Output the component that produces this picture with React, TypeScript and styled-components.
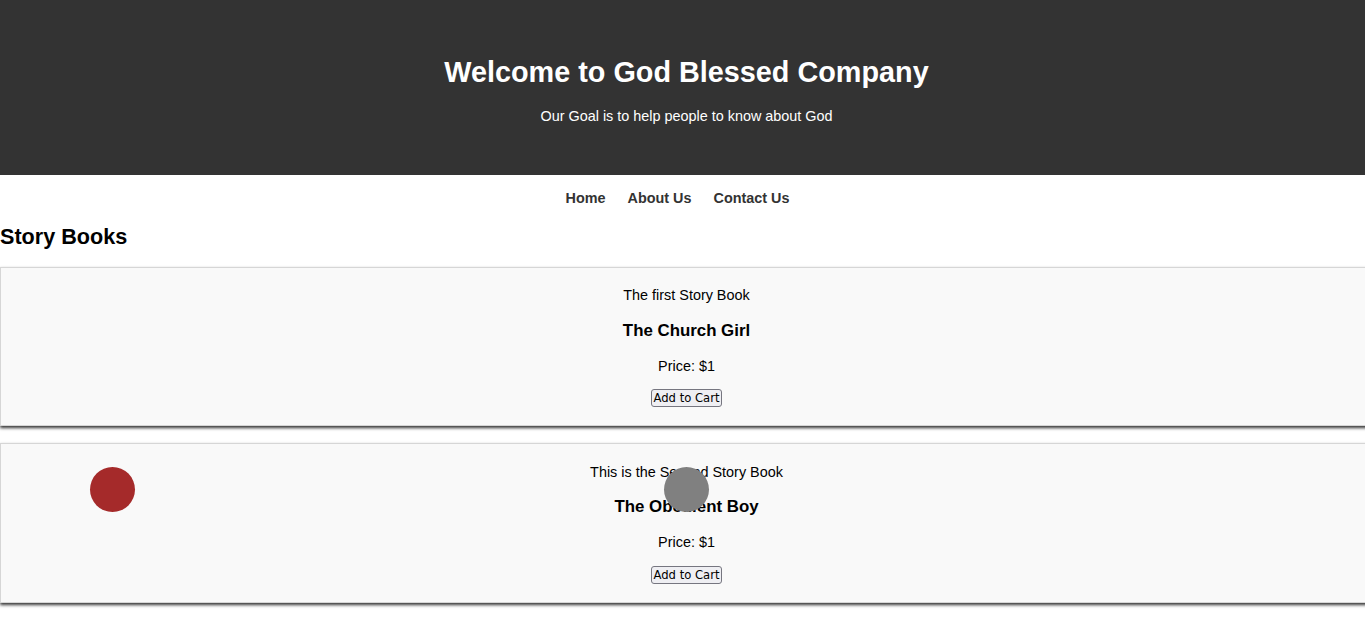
import React from "react";
import styled, { createGlobalStyle } from "styled-components";

const Global = createGlobalStyle`
  html, body { margin: 0; padding: 0; background: #fff; }
  body {
    font-family: "Liberation Sans", Arial, sans-serif;
    font-size: 14.4px;
    color: #000;
  }
  #root { position: relative; overflow-x: hidden; }
`;

const Page = styled.div`
  width: calc(100% + 8px);
`;

const Header = styled.header`
  background: #333;
  color: #fff;
  text-align: center;
  padding: 36px 0;
  height: 175px;
  box-sizing: border-box;
`;

const Title = styled.h1`
  font-size: 28.8px;
  font-weight: bold;
  margin: 20.3px 0 18.3px;
  line-height: 33px;
`;

const Tagline = styled.p`
  margin: 14.4px 0;
  line-height: 16.5px;
`;

const Nav = styled.nav`
  display: flex;
  justify-content: center;
  padding: 14.5px 0 14px;
  line-height: 16.5px;
`;

const NavLink = styled.a`
  color: #333;
  font-weight: bold;
  text-decoration: none;
  cursor: pointer;
  margin-right: 22px;
  &:last-child { margin-right: 18px; }
`;

const Section = styled.section`
  padding: 0;
`;

const SectionTitle = styled.h2`
  font-size: 21.6px;
  font-weight: bold;
  margin: 4px 0 18px;
  line-height: 25px;
`;

const Card = styled.div`
  background: #f9f9f9;
  border: 1px solid #d6d6d6;
  box-shadow: 0 2px 3px rgba(0, 0, 0, 0.8);
  text-align: center;
  padding: 5px 0 5px;
  margin: 0 0 17px;
`;

const Tag = styled.p`
  margin: 14.4px 0;
  line-height: 16.5px;
`;

const BookTitle = styled.h3`
  font-size: 16.85px;
  font-weight: bold;
  margin: 16.85px 0 17.85px;
  line-height: 19.4px;
`;

const Price = styled.p`
  margin: 14.4px 0;
  line-height: 16.5px;
`;

const Actions = styled.div`
  margin: 15px 0 12.9px;
  display: flex;
  justify-content: center;
`;

const CartButton = styled.button`
  font-family: "DejaVu Sans", sans-serif;
  font-size: 11.6px;
  line-height: 14px;
  padding: 1px 2px;
  color: #000;
  background: #efeff3;
  border: 1px solid #767680;
  border-radius: 3px;
  cursor: pointer;
`;

const Dot = styled.div<{ $color: string; $x: number; $y: number }>`
  position: absolute;
  width: 45px;
  height: 45px;
  border-radius: 50%;
  background: ${(p) => p.$color};
  left: ${(p) => p.$x}px;
  top: ${(p) => p.$y}px;
  pointer-events: none;
`;

const books = [
  { tag: "The first Story Book", title: "The Church Girl", price: "$1" },
  { tag: "This is the Second Story Book", title: "The Obedient Boy", price: "$1" },
];

export default function App() {
  return (
    <>
      <Global />
      <Page>
        <Header>
          <Title>Welcome to God Blessed Company</Title>
          <Tagline>Our Goal is to help people to know about God</Tagline>
        </Header>
        <Nav>
          <NavLink>Home</NavLink>
          <NavLink>About Us</NavLink>
          <NavLink>Contact Us</NavLink>
        </Nav>
        <Section>
          <SectionTitle>Story Books</SectionTitle>
          {books.map((b) => (
            <Card key={b.title}>
              <Tag>{b.tag}</Tag>
              <BookTitle>{b.title}</BookTitle>
              <Price>Price: {b.price}</Price>
              <Actions>
                <CartButton>Add to Cart</CartButton>
              </Actions>
            </Card>
          ))}
        </Section>
      </Page>
      <Dot $color="#a52a2a" $x={90} $y={467} />
      <Dot $color="#808080" $x={664} $y={467} />
    </>
  );
}
